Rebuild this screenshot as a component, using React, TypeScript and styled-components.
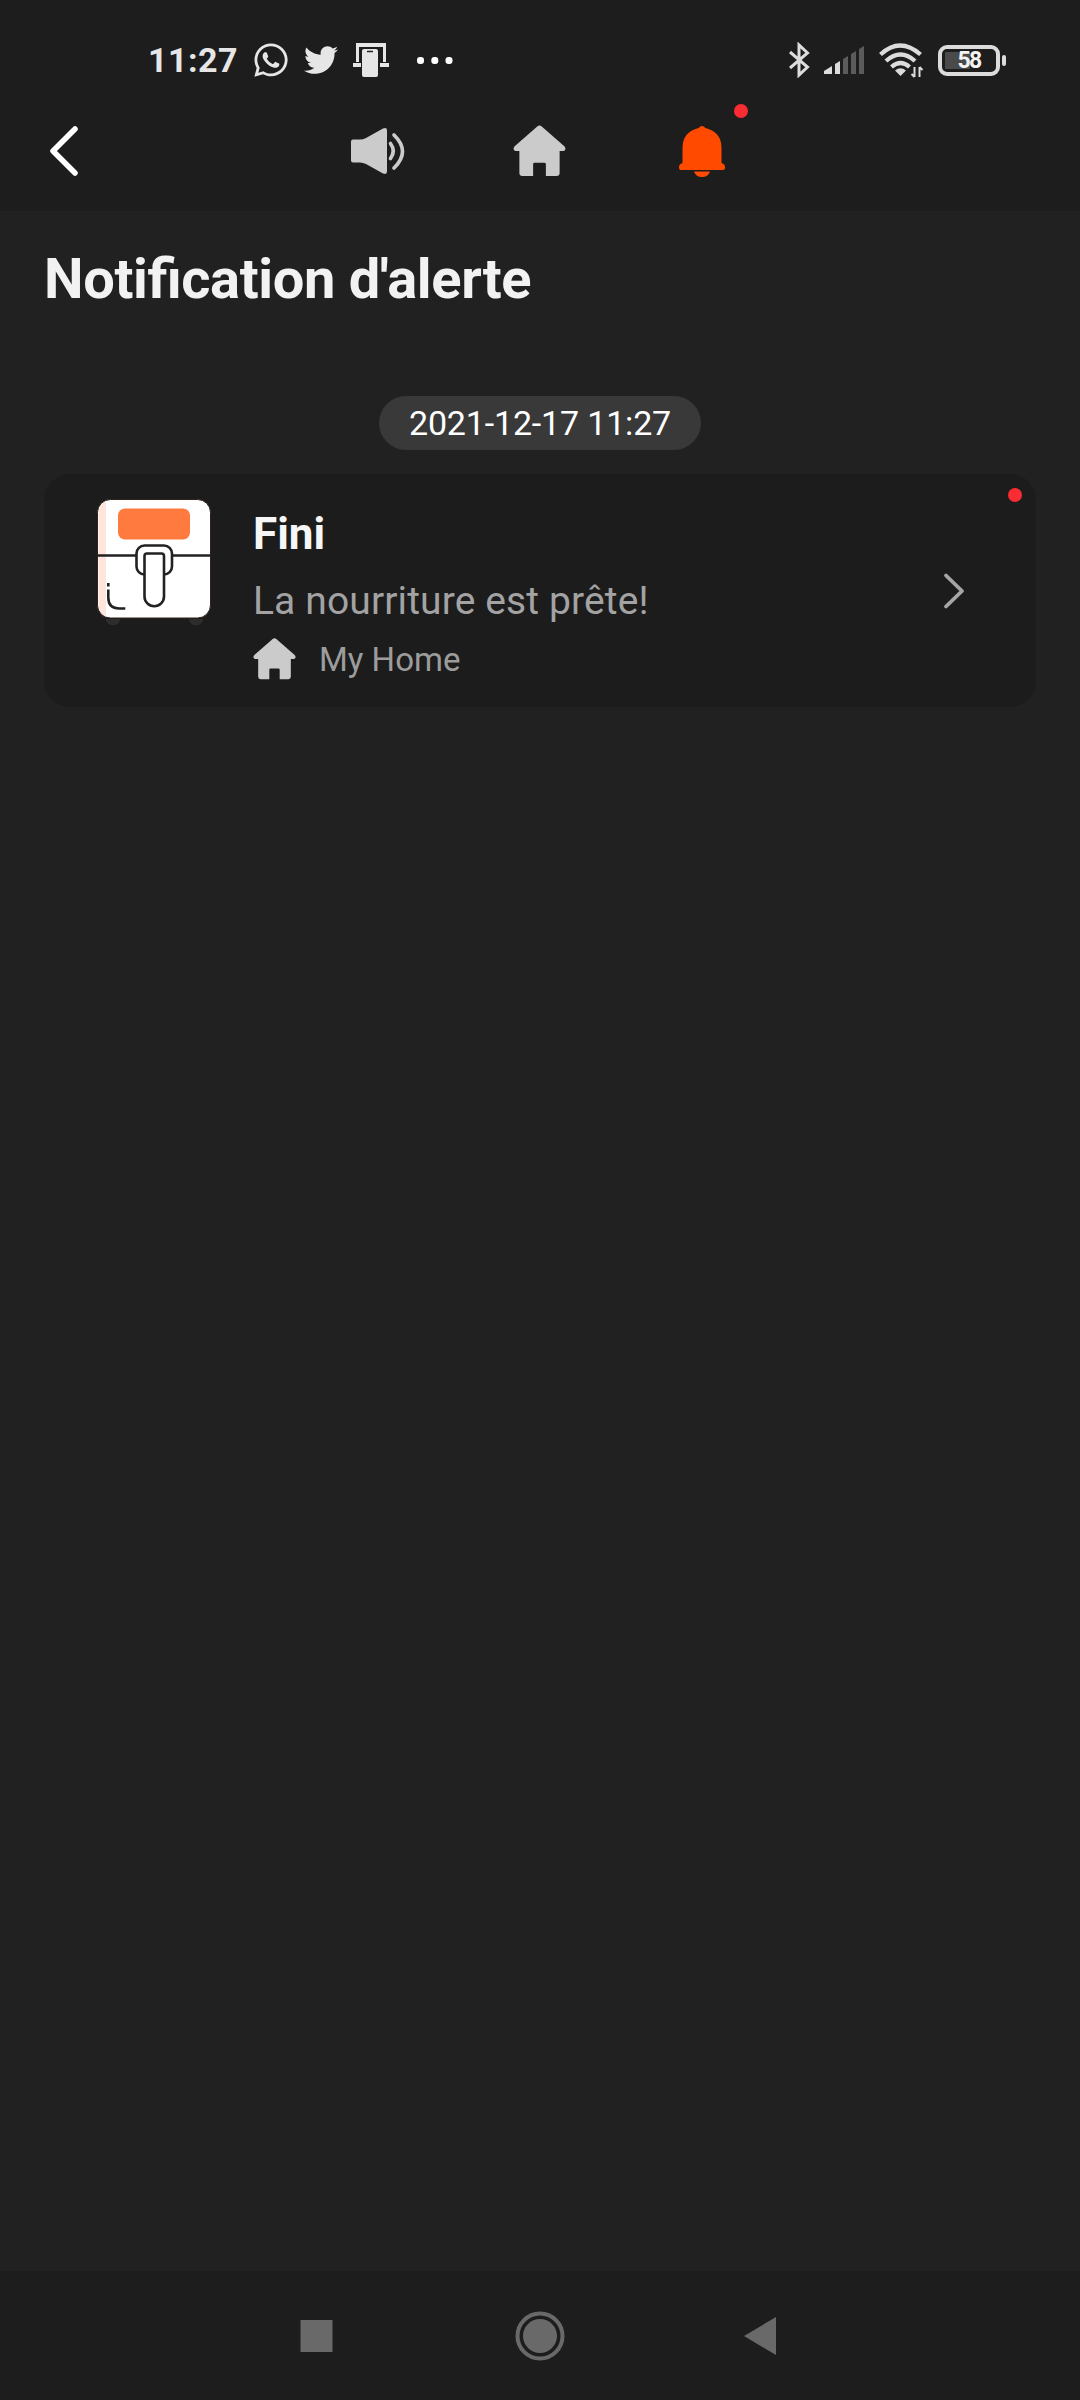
import React from "react";
import styled, { createGlobalStyle } from "styled-components";
import { FaTwitter, FaWhatsapp } from "react-icons/fa";

const Global = createGlobalStyle`
  * { box-sizing: border-box; }
  body { margin: 0; background: #212121; }
`;

const Screen = styled.div`
  width: 1080px;
  height: 2400px;
  display: flex;
  flex-direction: column;
  background: #212121;
  font-family: Roboto, "Noto Sans", sans-serif;
  overflow: hidden;
`;

const StatusBar = styled.header`
  height: 90px;
  padding: 32px 74px 0 148px;
  display: flex;
  justify-content: space-between;
  align-items: flex-start;
  background: #1d1d1d;
  color: #e6e6e6;
`;

const StatusGroup = styled.div<{ $gap: number }>`
  height: 56px;
  display: flex;
  align-items: center;
  gap: ${(p) => p.$gap}px;
`;

const Clock = styled.time`
  width: 89px;
  font-size: 34px;
  line-height: 57px;
  font-weight: 700;
  letter-spacing: 0.5px;
  white-space: nowrap;
`;

const Battery = styled.div`
  display: flex;
  align-items: center;
  gap: 2px;
`;

const BatteryCell = styled.div`
  width: 62px;
  height: 31px;
  border: 4px solid #dcdcdc;
  border-radius: 9px;
  display: flex;
  align-items: center;
  justify-content: center;
  background: linear-gradient(to right, transparent 3px, #4a4a4a 3px, #4a4a4a 28px, transparent 28px) content-box;
  padding: 3px 0;
  color: #f2f2f2;
  font-size: 23px;
  line-height: 23px;
  font-weight: 700;
  letter-spacing: -1.6px;
`;

const BatteryTip = styled.div`
  width: 4px;
  height: 11px;
  border-radius: 2px;
  background: #dcdcdc;
`;

const Toolbar = styled.nav`
  height: 121px;
  flex: none;
  display: grid;
  grid-template-columns: 297px 162px 162px 162px 297px;
  background: #1d1d1d;
`;

const ToolButton = styled.button<{ $start?: boolean }>`
  position: relative;
  height: 121px;
  padding: ${(p) => (p.$start ? "0 0 0 47px" : "0 1px 0 0")};
  border: 0;
  background: none;
  display: flex;
  align-items: center;
  justify-content: ${(p) => (p.$start ? "flex-start" : "center")};
`;

const UnreadDot = styled.span<{ $top: number; $right: number }>`
  position: absolute;
  top: ${(p) => p.$top}px;
  right: ${(p) => p.$right}px;
  width: 14px;
  height: 14px;
  border-radius: 50%;
  background: #f82c32;
`;

const Content = styled.main`
  flex: 1;
  padding: 0 44px;
  display: flex;
  flex-direction: column;
`;

const Title = styled.h1`
  margin: 35px 0 0;
  font-size: 56px;
  line-height: 66px;
  font-weight: 700;
  letter-spacing: -0.35px;
  font-feature-settings: "liga" 1;
  color: #f2f2f2;
`;

const DatePill = styled.div`
  align-self: center;
  width: 322px;
  height: 54px;
  margin-top: 84px;
  border-radius: 27px;
  display: flex;
  align-items: center;
  justify-content: center;
  background: #393939;
  color: #fff;
  font-size: 34px;
  letter-spacing: -0.17px;
`;

const Card = styled.article`
  position: relative;
  height: 233px;
  margin-top: 24px;
  padding: 22px 70px 0 48px;
  border-radius: 26px;
  display: flex;
  background: #1c1c1c;
`;

const CardBody = styled.div`
  flex: 1;
  padding-left: 42px;
`;

const Name = styled.h2`
  margin: 12px 0 0;
  font-size: 44px;
  line-height: 52px;
  font-weight: 700;
  color: #f6f6f6;
`;

const Message = styled.p`
  margin: 18px 0 0;
  font-size: 39px;
  line-height: 46px;
  letter-spacing: 0.12px;
  color: #a3a3a3;
`;

const Place = styled.div`
  height: 42px;
  margin-top: 13px;
  display: flex;
  align-items: center;
  gap: 23px;
  font-size: 33px;
  line-height: 42px;
  color: #9c9c9c;
`;

const PlaceName = styled.span`
  padding-top: 4px;
`;

const CardArrow = styled.div`
  height: 190px;
  display: flex;
  align-items: center;
`;

const NavBar = styled.footer`
  height: 129px;
  display: grid;
  grid-template-columns: 205px 222px 226px 215px 212px;
  justify-items: center;
  align-items: center;
  padding-bottom: 0;
  background: #1d1d1d;
`;

const House = ({ size }: { size: number }) => (
  <svg width={size} height={size} viewBox="0 0 54 54" fill="#cbcbcb">
    <path d="M24.7 2.6q2.3-2.200 4.600 0l23 20q1.600 1.700 1 3.400-.600 1.600-2.600 1.600H47.500V50q0 3-3 3H33.500V41q0-1.500-1.500-1.500H22q-1.500 0-1.500 1.500V53H9.500q-3 0-3-3V27.600H3.300q-2 0-2.600-1.600-.600-1.700 1-3.400z" />
  </svg>
);

const Fryer = () => (
  <svg width="119" height="134" viewBox="92 496 119 134" fill="none" stroke="#222" strokeWidth="2.6">
    <path d="M107 619q1 5 6 5t6-5M190 619q1 5 6 5t6-5" stroke="#2d2d2d" fill="#2d2d2d" />
    <rect x="97.500" y="499.500" width="113" height="118.500" rx="13" fill="#fff" stroke="#30221c" strokeWidth="1" />
    <path d="M106 501.500q-7.500 3-7.500 12v91q0 9 7.500 12z" fill="#ffe5dc" stroke="none" />
    <path d="M98 555.500h112.500" />
    <rect x="118" y="508.500" width="72" height="31" rx="7" fill="#ff7a3e" stroke="none" />
    <rect x="136.500" y="545.500" width="35.500" height="29" rx="8" fill="#fff" />
    <path d="M144.500 556q0-2.500 2.500-2.500h14.500q2.500 0 2.500 2.500v40.500a9.750 9.750 0 0 1-19.500 0z" fill="#fff" />
    <path d="M108.300 583v3.500M108.300 589.500v8q0 11 11 11h6" />
  </svg>
);

export default function App() {
  return (
    <Screen>
      <Global />
      <StatusBar>
        <StatusGroup $gap={14.5}>
          <Clock>11:27</Clock>
          <FaWhatsapp size={38} />
          <FaTwitter size={34} />
          <svg width="36" height="36" viewBox="0 0 36 36" fill="#e6e6e6">
            <path d="M3 1h30v19h-3V5H6v15H3z" />
            <path d="M0 21h8v4H0zM27 21h9v4h-9z" />
            <rect x="9" y="7" width="16" height="28" rx="2" />
            <path d="M14 9.500h6" stroke="#222" strokeWidth="1.500" />
          </svg>
          <svg width="60" height="10" viewBox="0 0 60 10" fill="#fff">
            <rect x="14" y="2" width="7" height="7" rx="3" />
            <rect x="28.300" y="2" width="7" height="7" rx="3" />
            <rect x="42.500" y="2" width="7" height="7" rx="3" />
          </svg>
        </StatusGroup>
        <StatusGroup $gap={14}>
          <svg width="23" height="36" viewBox="-1 0 23 36" fill="none" stroke="#dcdcdc" strokeWidth="3">
            <path d="M2 10 19.500 25 11 33V3l8.500 8L2 26" />
          </svg>
          <svg width="41" height="28" viewBox="0 0 41 28">
            <path d="M0 28v-3l8-5v8z" fill="#dcdcdc" />
            <path d="M11 28V18l5-3v13z" fill="#dcdcdc" />
            <path d="M19 28V13l5-3v18zM27 28V8l5-3v23zM35 28V3l5-3v28z" fill="#5b5b5b" />
          </svg>
          <svg width="45" height="36" viewBox="0 0 45 36" fill="none" stroke="#dcdcdc" strokeWidth="4.300">
            <path d="M1.500 12.500Q21-5.500 41.500 12.500M7 19Q21.500 6 36 19M12.500 25q9-8 18 0" />
            <path d="M21.500 34l-5.500-5.500q5.500-4.500 11 0z" fill="#dcdcdc" stroke="none" />
            <path d="M35.500 35V25M40.500 25v10M32.500 32l3 3M40.500 25l3 3" strokeWidth="2" />
          </svg>
          <Battery>
            <BatteryCell>58</BatteryCell>
            <BatteryTip />
          </Battery>
        </StatusGroup>
      </StatusBar>
      <Toolbar>
        <ToolButton $start aria-label="Retour">
          <svg width="32" height="50" viewBox="0 0 32 50" fill="none" stroke="#fff" strokeWidth="5.500" strokeLinecap="round" strokeLinejoin="round">
            <path d="M28 3 6 25 28 47" />
          </svg>
        </ToolButton>
        <ToolButton aria-label="Son">
          <svg width="54" height="48" viewBox="0 0 54 48" fill="#cbcbcb">
            <path d="M0 14.500q0-2 2-2H9q3 0 6-1.500L32 1.600Q36 0 36 3.500v41q0 3.500-4 2L15 37q-3-1.500-6-1.500H2q-2 0-2-2z" />
            <path d="M39.500 16.500q5.500 7.500 0 15M43 8q17 16.500 0 33" fill="none" stroke="#cbcbcb" strokeWidth="3.700" strokeLinecap="round" />
          </svg>
        </ToolButton>
        <ToolButton aria-label="Maison">
          <House size={53} />
        </ToolButton>
        <ToolButton aria-label="Alertes">
          <svg width="46" height="52" viewBox="0 0 46 52" fill="#ff4a00">
            <path d="M19.500 3Q23-1 26.500 3 42.500 7 42.500 23V38q3.500 1 3.500 4v1q0 2-2 2H2q-2 0-2-2v-1q0-3 3.500-4V23Q3.500 7 19.500 3z" />
            <path d="M15 46.500h16q-2 5.500-8 5.500t-8-5.500z" />
          </svg>
          <UnreadDot $top={14} $right={35} />
        </ToolButton>
      </Toolbar>
      <Content>
        <Title>Notification d'alerte</Title>
        <DatePill>2021-12-17 11:27</DatePill>
        <Card>
          <Fryer />
          <CardBody>
            <Name>Fini</Name>
            <Message>La nourriture est prête!</Message>
            <Place>
              <House size={43} />
              <PlaceName>My Home</PlaceName>
            </Place>
          </CardBody>
          <CardArrow>
            <svg width="24" height="38" viewBox="0 0 24 38" fill="none" stroke="#a6a6a6" strokeWidth="3.800" strokeLinecap="round" strokeLinejoin="round">
              <path d="M4 3.500 20 19 4 34.500" />
            </svg>
          </CardArrow>
          <UnreadDot $top={14} $right={14} />
        </Card>
      </Content>
      <NavBar>
        <span />
        <svg width="33" height="34" viewBox="0 0 33 34">
          <path d="M0.500 1h32v32h-32z" fill="#696969" />
        </svg>
        <svg width="52" height="52" viewBox="0 0 52 52">
          <circle cx="26" cy="26" r="22.500" fill="none" stroke="#696969" strokeWidth="4" />
          <circle cx="26" cy="26" r="17" fill="#696969" />
        </svg>
        <svg width="33" height="40" viewBox="0 0 33 40">
          <path d="M32 1v38L0 20z" fill="#696969" />
        </svg>
      </NavBar>
    </Screen>
  );
}
